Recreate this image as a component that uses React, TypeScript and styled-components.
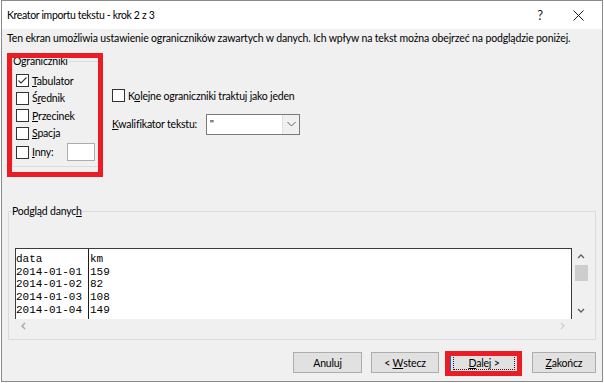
import React from "react";
import styled, { createGlobalStyle, css } from "styled-components";

const Global = createGlobalStyle`
  html, body { margin: 0; padding: 0; background: #ffffff; }
  body {
    font-family: Lato, "Liberation Sans", Arial, sans-serif;
    font-size: 10.5px;
    letter-spacing: -0.2px;
    color: #000;
  }
  #root { width: 604px; height: 383px; overflow: hidden; }
`;

const Window = styled.div`
  box-sizing: border-box;
  margin-left: 1px;
  width: 602px;
  height: 382px;
  border: 1px solid #8a8a8a;
  background: #f0f0f0;
  display: flex;
  flex-direction: column;
`;

const TitleBar = styled.div`
  height: 28px;
  background: #ffffff;
  display: flex;
  align-items: center;
  padding-left: 5px;
  flex-shrink: 0;
  font-size: 10.5px;
  letter-spacing: -0.35px;
`;

const TitleText = styled.div`
  flex: 1;
  line-height: 16px;
`;

const TitleButton = styled.div<{ $w: number }>`
  width: ${(p) => p.$w}px;
  height: 28px;
  display: flex;
  align-items: center;
  justify-content: center;
  font-size: 13px;
  color: #1a1a1a;
`;

const Body = styled.div`
  flex: 1;
  display: flex;
  flex-direction: column;
  padding: 1px 6px 0 5px;
`;

const Description = styled.div`
  line-height: 16px;
  height: 16px;
  white-space: nowrap;
  letter-spacing: -0.14px;
`;

const TopSection = styled.div`
  display: flex;
  margin-top: 8px;
`;

const Highlight = styled.div<{ $t: number; $r: number; $b: number; $l: number }>`
  position: relative;
  &::after {
    content: "";
    position: absolute;
    top: ${(p) => p.$t}px;
    right: ${(p) => p.$r}px;
    bottom: ${(p) => p.$b}px;
    left: ${(p) => p.$l}px;
    border: 5px solid #ec1c24;
    pointer-events: none;
    z-index: 5;
  }
`;

const DelimWrap = styled(Highlight)`
  margin-left: 5px;
  width: 90px;
`;

const Group = styled.fieldset<{ $pad: string }>`
  box-sizing: border-box;
  margin: 0;
  border: 1px solid #dcdcdc;
  padding: ${(p) => p.$pad};
  min-width: 0;
`;

const Legend = styled.legend`
  padding: 0;
  line-height: 15px;
`;

const CheckRow = styled.div<{ $h?: number }>`
  display: flex;
  align-items: center;
  height: ${(p) => p.$h ?? 17.5}px;
  gap: 3px;
  white-space: nowrap;
`;

const Box = styled.span`
  box-sizing: border-box;
  width: 13px;
  height: 13px;
  border: 1px solid #333333;
  background: #ffffff;
  display: inline-flex;
  flex-shrink: 0;
`;

const Key = styled.span`
  text-decoration: underline;
  text-underline-offset: 1px;
`;

const SmallInput = styled.span`
  box-sizing: border-box;
  width: 28px;
  height: 18px;
  margin-left: auto;
  margin-right: 6px;
  background: #ffffff;
  border: 1px solid #adadad;
`;

const DelimList = styled.div`
  padding-left: 3px;
  display: flex;
  flex-direction: column;
`;

const RightColumn = styled.div`
  margin-left: 10px;
  padding-top: 33px;
  display: flex;
  flex-direction: column;
`;

const QualifierRow = styled.div`
  margin-top: 10px;
  display: flex;
  align-items: center;
  height: 20px;
`;

const QualifierLabel = styled.span`
  width: 94px;
  white-space: nowrap;
`;

const Combo = styled.div`
  box-sizing: border-box;
  width: 94px;
  height: 21px;
  border: 1px solid #7a7a7a;
  background: #ffffff;
  display: flex;
`;

const ComboValue = styled.span`
  flex: 1;
  padding-left: 3px;
  line-height: 19px;
  color: #000000;
  font-family: "Liberation Sans", Arial, sans-serif;
`;

const ComboButton = styled.span`
  width: 16px;
  background: #f0f0f0;
  border-left: 1px solid #e0e0e0;
  display: flex;
  align-items: center;
  justify-content: center;
`;

const PreviewGroup = styled(Group)`
  margin: 37px 0 0 1px;
  width: 588px;
`;

const ListFrame = styled.div`
  margin-left: 3px;
  width: 575px;
  display: grid;
  grid-template-columns: 557px 18px;
  grid-template-rows: 71px 14px;
`;

const PreviewArea = styled.div`
  box-sizing: border-box;
  background: #ffffff;
  border: 1px solid #3c3c3c;
  border-bottom: none;
  padding-top: 4px;
  display: flex;
  font-family: "Liberation Mono", "Courier New", monospace;
  font-size: 11px;
  letter-spacing: 0;
  line-height: 12.7px;
  overflow: hidden;
`;

const DataColumn = styled.div<{ $w?: number }>`
  ${(p) =>
    p.$w
      ? css`
          width: ${p.$w}px;
          border-right: 1px solid #1e1e1e;
          margin-top: -4px;
          padding-top: 4px;
        `
      : css`
          flex: 1;
          padding-left: 1px;
        `}
  white-space: pre;
`;

const VScroll = styled.div`
  background: #f0f0f0;
  display: flex;
  flex-direction: column;
  align-items: center;
`;

const ArrowCell = styled.div`
  height: 17px;
  width: 18px;
  display: flex;
  align-items: center;
  justify-content: center;
  flex-shrink: 0;
`;

const Thumb = styled.div`
  width: 13px;
  height: 16px;
  background: #cdcdcd;
`;

const Track = styled.div`
  flex: 1;
`;

const HScroll = styled.div`
  background: #f0f0f0;
  display: flex;
  justify-content: space-between;
  align-items: center;
`;

const Corner = styled.div`
  background: #f0f0f0;
`;

const ButtonRow = styled.div`
  margin-top: 12px;
  display: flex;
  justify-content: flex-end;
`;

const ButtonWrap = styled(Highlight)<{ $ml: number }>`
  margin-left: ${(p) => p.$ml}px;
`;

const Button = styled.div<{ $w: number; $default?: boolean; $ml?: number }>`
  box-sizing: border-box;
  position: relative;
  width: ${(p) => p.$w}px;
  height: 21px;
  margin-left: ${(p) => p.$ml ?? 0}px;
  background: #e1e1e1;
  border: 1px solid ${(p) => (p.$default ? "#0078d7" : "#adadad")};
  display: flex;
  align-items: center;
  justify-content: center;
  line-height: 16px;
  white-space: pre;
  ${(p) =>
    p.$default &&
    css`
      &::before {
        content: "";
        position: absolute;
        inset: 2px;
        border: 1px dotted #202020;
      }
    `}
`;

const Chevron = ({ dir, color = "#606060", size = 7 }: { dir: "up" | "down" | "left" | "right"; color?: string; size?: number }) => {
  const paths: Record<string, string> = {
    up: "M1 5 L4 2 L7 5",
    down: "M1 2 L4 5 L7 2",
    left: "M5 1 L2 4 L5 7",
    right: "M2 1 L5 4 L2 7",
  };
  return (
    <svg width={size + 1} height={size + 1} viewBox="0 0 8 8">
      <path d={paths[dir]} fill="none" stroke={color} strokeWidth="1.4" />
    </svg>
  );
};

const Check = () => (
  <svg width="11" height="11" viewBox="0 0 11 11">
    <path d="M1.5 5.5 L4 8 L9.5 2.5" fill="none" stroke="#333" strokeWidth="1.1" />
  </svg>
);

const CloseIcon = () => (
  <svg width="11" height="11" viewBox="0 0 11 11">
    <path d="M0.5 0.5 L10.5 10.5 M10.5 0.5 L0.5 10.5" stroke="#1a1a1a" strokeWidth="1" />
  </svg>
);

const ComboChevron = () => (
  <svg width="9" height="6" viewBox="0 0 9 6">
    <path d="M0.5 1 L4.5 5 L8.5 1" fill="none" stroke="#606060" strokeWidth="1" />
  </svg>
);

const rowsData = ["data", "2014-01-01", "2014-01-02", "2014-01-03", "2014-01-04"];
const rowsKm = ["km", "159", "82", "108", "149"];

export default function App() {
  return (
    <>
      <Global />
      <Window>
        <TitleBar>
          <TitleText>Kreator importu tekstu - krok 2 z 3</TitleText>
          <TitleButton $w={30}>?</TitleButton>
          <TitleButton $w={47}>
            <CloseIcon />
          </TitleButton>
        </TitleBar>
        <Body>
          <Description>
            Ten ekran umożliwia ustawienie ograniczników zawartych w danych. Ich wpływ na tekst można obejrzeć na podglądzie poniżej.
          </Description>
          <TopSection>
            <DelimWrap $t={-1} $r={-1} $b={-10} $l={-5}>
              <Group $pad="3px 0 4px 0">
                <Legend>Ograniczniki</Legend>
                <DelimList>
                  <CheckRow>
                    <Box>
                      <Check />
                    </Box>
                    <span>
                      <Key>T</Key>abulator
                    </span>
                  </CheckRow>
                  <CheckRow>
                    <Box />
                    <span>
                      Ś<Key>r</Key>ednik
                    </span>
                  </CheckRow>
                  <CheckRow>
                    <Box />
                    <span>
                      <Key>P</Key>rzecinek
                    </span>
                  </CheckRow>
                  <CheckRow>
                    <Box />
                    <span>
                      <Key>S</Key>pacja
                    </span>
                  </CheckRow>
                  <CheckRow $h={20}>
                    <Box />
                    <span>
                      <Key>I</Key>nny:
                    </span>
                    <SmallInput />
                  </CheckRow>
                </DelimList>
              </Group>
            </DelimWrap>
            <RightColumn>
              <CheckRow $h={17}>
                <Box />
                <span>
                  K<Key>o</Key>lejne ograniczniki traktuj jako jeden
                </span>
              </CheckRow>
              <QualifierRow>
                <QualifierLabel>
                  <Key>K</Key>walifikator tekstu:
                </QualifierLabel>
                <Combo>
                  <ComboValue>"</ComboValue>
                  <ComboButton>
                    <ComboChevron />
                  </ComboButton>
                </Combo>
              </QualifierRow>
            </RightColumn>
          </TopSection>
          <PreviewGroup $pad="29px 5px 6px 3px">
            <Legend>
              Podgląd danyc<Key>h</Key>
            </Legend>
            <ListFrame>
              <PreviewArea>
                <DataColumn $w={72}>{rowsData.join("\n")}</DataColumn>
                <DataColumn>{rowsKm.join("\n")}</DataColumn>
              </PreviewArea>
              <VScroll>
                <ArrowCell>
                  <Chevron dir="up" />
                </ArrowCell>
                <Thumb />
                <Track />
                <ArrowCell>
                  <Chevron dir="down" />
                </ArrowCell>
              </VScroll>
              <HScroll>
                <ArrowCell>
                  <Chevron dir="left" color="#a6a6a6" />
                </ArrowCell>
                <ArrowCell>
                  <Chevron dir="right" color="#d0d0d0" />
                </ArrowCell>
              </HScroll>
              <Corner />
            </ListFrame>
          </PreviewGroup>
          <ButtonRow>
            <Button $w={69}>Anuluj</Button>
            <Button $w={68} $ml={9}>
              {"< "}
              <Key>W</Key>stecz
            </Button>
            <ButtonWrap $ml={11} $t={-1} $r={-4} $b={-3} $l={-5}>
              <Button $w={68} $default>
                <Key>D</Key>
                {"alej >"}
              </Button>
            </ButtonWrap>
            <Button $w={64} $ml={14}>
              <Key>Z</Key>akończ
            </Button>
          </ButtonRow>
        </Body>
      </Window>
    </>
  );
}
